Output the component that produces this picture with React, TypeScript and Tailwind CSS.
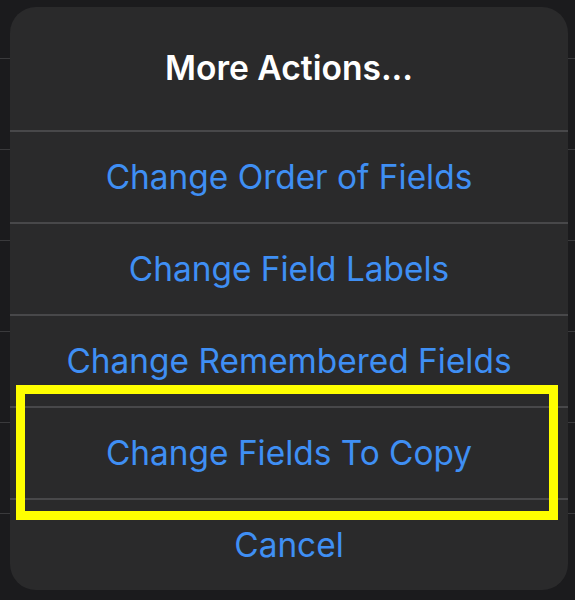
import React from "react";

const rows = [
  "Change Order of Fields",
  "Change Field Labels",
  "Change Remembered Fields",
  "Change Fields To Copy",
  "Cancel",
];

export default function App() {
  const font = { fontFamily: "Inter, 'Noto Sans', sans-serif" };
  return (
    <div className="relative w-[575px] h-[600px] overflow-hidden bg-[#1b1b1d]" style={font}>
      {/* underlying list */}
      <div className="flex flex-col">
        <div className="h-[58px]" />
        {[0, 1, 2, 3, 4, 5].map((i) => (
          <div key={i} className="flex flex-col">
            <div className="h-[1px] bg-[#3a3a3c]" />
            <div className="h-[90px]" />
          </div>
        ))}
      </div>

      {/* action sheet */}
      <div className="absolute left-[10px] top-[7px] w-[558px] h-[583px] rounded-[26px] bg-[#2a2a2b] flex flex-col overflow-hidden">
        <div className="h-[125px] flex items-center justify-center">
          <span className="text-white text-[33.6px] font-semibold">More Actions...</span>
        </div>
        {rows.map((r) => (
          <div key={r} className="flex flex-col">
            <div className="h-[2px] bg-[#48484a]" />
            <div className="h-[90px] flex items-center justify-center">
              <span className="text-[#3f8ff4] text-[33.4px] font-normal">{r}</span>
            </div>
          </div>
        ))}
      </div>

      {/* highlight */}
      <div className="absolute left-[16px] top-[385px] w-[542px] h-[135px] border-[9px] border-[#ffff00]" />
    </div>
  );
}
